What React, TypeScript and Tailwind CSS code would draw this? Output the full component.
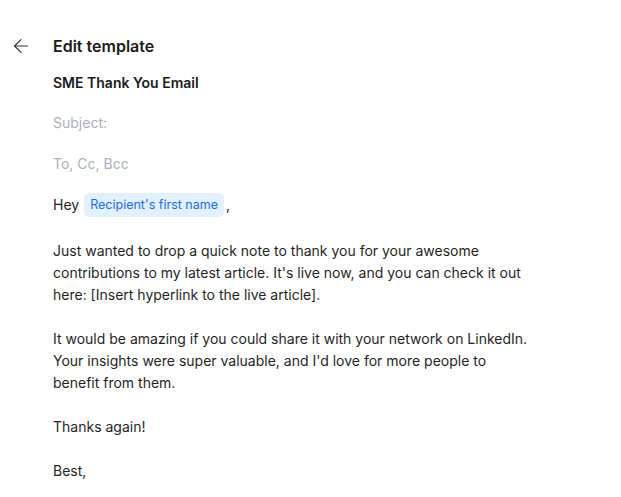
import { ArrowLeft } from 'lucide-react';

const BODY = 'text-[14px] leading-[22px] text-[#1f1f1f]';

export default function App() {
  return (
    <div className="min-h-screen bg-white font-['Inter',sans-serif] text-[#1a1a1a]">
      <header className="flex items-center gap-[21px] pl-[10px] pt-[35px]">
        <button className="w-[22px] h-[22px] grid place-items-center text-[#333] bg-transparent border-0">
          <ArrowLeft size={22} strokeWidth={1.25} />
        </button>
        <h1 className="text-[16px] font-semibold leading-[22px] m-0">Edit template</h1>
      </header>

      <div className="pl-[53px] pr-[80px]">
        <div className="mt-[16px] text-[14px] font-semibold leading-[20px]">SME Thank You Email</div>
        <div className="mt-[20px] text-[14px] leading-[20px] text-[#a9b1bf]">Subject:</div>
        <div className="mt-[21px] text-[14px] leading-[20px] text-[#a9b1bf]">To, Cc, Bcc</div>

        <div className={`mt-[19px] flex items-center ${BODY}`}>
          <span>Hey</span>
          <span className="ml-[5px] inline-flex items-center h-[24px] px-[6px] rounded-[5px] bg-[#e3f0fd] text-[#1b6fd8] text-[12.5px]">
            Recipient's first name
          </span>
          <span className="ml-[2px]">,</span>
        </div>

        <div className={`mt-[23px] max-w-[480px] ${BODY}`}>
          <p>
            Just wanted to drop a quick note to thank you for your awesome contributions to my latest article. It's live now, and you can check it out here: [Insert hyperlink to the live article].
          </p>
          <p className="mt-[22px]">
            It would be amazing if you could share it with your network on LinkedIn. Your insights were super valuable, and I'd love for more people to benefit from them.
          </p>
          <p className="mt-[22px]">Thanks again!</p>
          <p className="mt-[22px]">Best,</p>
        </div>
      </div>
    </div>
  );
}
